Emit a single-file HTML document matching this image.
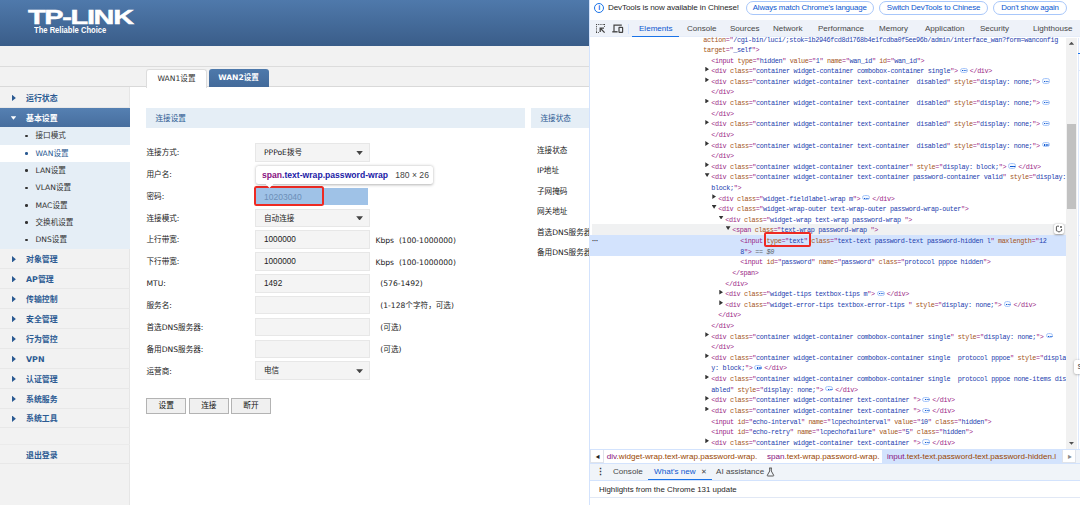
<!DOCTYPE html><html lang="zh"><head><meta charset="utf-8"><title>TP-LINK</title><style>
*{box-sizing:border-box;margin:0;padding:0}
html,body{width:1080px;height:505px;overflow:hidden;background:#fff}
body{position:relative;font-family:"Liberation Sans","Noto Sans CJK SC",sans-serif;font-size:9px;color:#333}
.abs{position:absolute}
#left{position:absolute;left:0;top:0;width:589px;height:505px;background:#fff;overflow:hidden}
#hdr{position:absolute;left:0;top:0;width:589px;height:46px;background:linear-gradient(#4f79ab,#3a5d89)}
#logo{position:absolute;left:27.5px;top:5.6px;font-weight:bold;font-size:19.8px;color:#fff;letter-spacing:-0.9px;transform-origin:0 0;transform:scaleX(1.46);white-space:nowrap;line-height:22px;-webkit-text-stroke:0.45px #fff}
#tag{position:absolute;left:34px;top:24.3px;font-weight:bold;font-size:8.7px;color:#fff;white-space:nowrap;line-height:12px;transform-origin:0 0;transform:scaleX(0.875)}
#band{position:absolute;left:0;top:46px;width:589px;height:41px;background:#f2f2f2}
#band .l1{position:absolute;left:0;top:20px;width:589px;height:1px;background:#dcdcdc}
#band .l2{position:absolute;left:0;top:40px;width:589px;height:1px;background:#d9d9d9}
#side{position:absolute;left:0;top:87px;width:130px;height:418px;background:#f2f2f2;border-right:1px solid #e6e6e6}
.mi{position:absolute;left:0;width:130px;height:20px;line-height:21px;font-family:"DejaVu Sans","Noto Sans CJK SC",sans-serif;font-weight:bold;color:#2b5a92;font-size:7.9px;padding-left:26px;white-space:nowrap;border-bottom:1px solid #e8e8e8}
.mi .ar{position:absolute;left:12px;top:7.2px;width:3.9px;height:6.4px;background:#2b5a92;clip-path:polygon(0 0,100% 50%,0 100%)}
.mi.act{background:linear-gradient(#5580b2,#476e9e);color:#fff}
.mi.act .ar{left:10.7px;top:8.7px;width:5.6px;height:3.5px;background:#fff;clip-path:polygon(0 0,100% 0,50% 100%)}
.si{position:absolute;left:0;width:130px;height:17.4px;line-height:17.4px;color:#333;font-family:"DejaVu Sans","Noto Sans CJK SC",sans-serif;font-size:7.6px;padding-left:35.5px;white-space:nowrap}
.si i{position:absolute;left:25px;top:7.5px;width:2.6px;height:2.6px;border-radius:50%;background:#333}
.si.cur{background:#fff;color:#2b5a92}
.si.cur i{background:#2b5a92}
#main{position:absolute;left:131px;top:87px;width:458px;height:418px;background:#fff}
.tab{position:absolute;top:68.6px;height:18px;line-height:18px;font-family:"DejaVu Sans","Noto Sans CJK SC",sans-serif;font-size:7.6px;text-align:center;border-radius:3px 3px 0 0;white-space:nowrap}
.tab.a{left:146px;width:61px;background:#fff;border:1px solid #ddd;border-bottom:0;color:#333;height:19px}
.tab.b{left:208.5px;width:60px;background:linear-gradient(#4e79ab,#436a9a);color:#fff;font-weight:bold}
.sec{position:absolute;top:108px;height:20px;line-height:21.6px;overflow:hidden;background:#e5eef6;color:#2b5a92;font-family:"DejaVu Sans","Noto Sans CJK SC",sans-serif;font-size:7.6px;padding-left:9.5px;white-space:nowrap}
.lb{position:absolute;left:146.5px;height:18px;line-height:18px;font-family:"DejaVu Sans","Noto Sans CJK SC",sans-serif;font-size:7.6px;color:#222;white-space:nowrap}
.ip{position:absolute;left:255px;width:115px;height:18.6px;line-height:18.6px;background:#f4f4f4;border:1px solid #e7e7e7;font-size:8.2px;color:#222;padding-left:8px;white-space:nowrap}
.ip .dn{position:absolute;right:6px;top:6.8px;width:6.8px;height:4.1px;background:#444;clip-path:polygon(0 0,100% 0,50% 100%)}
.ip.s{font-family:"DejaVu Sans","Noto Sans CJK SC",sans-serif;font-size:7.6px}
.hint{position:absolute;left:375.5px;height:18px;line-height:18px;font-family:"DejaVu Sans","Noto Sans CJK SC",sans-serif;font-size:7.6px;color:#222;white-space:nowrap}
.btn{position:absolute;top:398px;height:15.6px;line-height:13.6px;font-family:"DejaVu Sans","Noto Sans CJK SC",sans-serif;font-size:7.7px;text-align:center;background:#f0f0f0;border:1px solid #b3b3b3;color:#111}
.rl{position:absolute;left:537px;height:18px;line-height:18px;font-family:"DejaVu Sans","Noto Sans CJK SC",sans-serif;font-size:7.6px;color:#222;white-space:nowrap}
#tip{position:absolute;left:256px;top:166.4px;width:177px;height:17.6px;background:#fff;border-radius:2.5px;box-shadow:0 0.5px 3px rgba(0,0,0,.3);font-size:8.6px;line-height:18px;white-space:nowrap;padding-left:6px;color:#444}
#tip b.p{color:#881280}
#tip b.c{color:#1a1aa6}
#tip:after{content:"";position:absolute;left:9.5px;top:17.5px;width:8px;height:4px;background:#fff;clip-path:polygon(0 0,100% 0,50% 100%)}
#hl{position:absolute;left:255px;top:187.7px;width:113px;height:17.3px;background:#9fc2e7}
#hl span{position:absolute;left:9px;top:0;line-height:19px;font-size:8.5px;color:#6c8fb8}
#red1{position:absolute;left:254px;top:186px;width:70px;height:20px;border:2px solid #ee2a23;border-radius:2.5px}
/* devtools */
#dt{position:absolute;left:589px;top:0;width:491px;height:505px;background:#fff;border-left:1px solid #d3e3fd;overflow:hidden;font-family:"Liberation Sans","Noto Sans CJK SC",sans-serif}
#info{position:absolute;left:0;top:0;width:491px;height:19px;background:#fff}
#info .ic{position:absolute;left:4.2px;top:2.6px;width:10.2px;height:10.2px;border:1.1px solid #1a73e8;border-radius:50%;color:#1a73e8;font-size:7.5px;line-height:8.2px;text-align:center;font-weight:bold}
#info .tx{position:absolute;left:18px;top:0;line-height:16.6px;font-size:8.1px;letter-spacing:-0.12px;color:#1f1f1f;white-space:nowrap}
.pill{position:absolute;top:1px;height:13.5px;line-height:11.6px;border:1px solid #a8c7fa;border-radius:7px;color:#0b57d0;font-size:7.9px;letter-spacing:-0.17px;text-align:center;white-space:nowrap;background:#fff}
#tabs{z-index:3;position:absolute;left:0;top:19.5px;width:491px;height:17.3px;background:#eef2f9;border-bottom:1px solid #e6edf9}
#tabs span{position:absolute;top:0;line-height:18px;font-size:8.05px;color:#474747;white-space:nowrap}
#tabs span.on{color:#0b57d0}
#tabs .ul{position:absolute;left:41.8px;top:16.1px;width:47px;height:1.7px;background:#1a73e8}
#tabs .sep{position:absolute;left:38px;top:4px;width:1px;height:10px;background:#d3e3fd}
.cl{position:absolute;left:0;width:476.5px;height:10.7px;line-height:10.6px;font-family:"Liberation Mono","Noto Sans CJK SC",monospace;font-size:6.8px;letter-spacing:-0.346px;white-space:pre;color:#222}
.cl .t{color:#9a2686}.cl .n{color:#a4551a}.cl .v{color:#2340ae}.cl .g{color:#5f6368}
.cl .tw{position:absolute;background:#333}
.cl .tw.r{top:1.9px;width:3.7px;height:4.8px;clip-path:polygon(0 0,100% 50%,0 100%)}
.cl .tw.d{top:2.2px;width:4.8px;height:3.7px;margin-left:-0.6px;clip-path:polygon(0 0,100% 0,50% 100%)}
.cl .el{display:inline-block;width:7.8px;height:5.2px;border:0.8px solid #a8c7fa;border-radius:2.6px;background:#f4f8fe;vertical-align:-0.6px;margin:0 2.1px 0 2.1px;position:relative;font-size:0;letter-spacing:0}
.cl .el:after{content:"";position:absolute;left:1.1px;top:1.35px;width:1.1px;height:1.1px;background:#0b57d0;box-shadow:1.7px 0 0 #0b57d0,3.4px 0 0 #0b57d0}
#sb{position:absolute;left:476.2px;top:37.5px;width:11.2px;height:411.5px;background:#f1f1f1}
#sb .th{position:absolute;left:1px;top:86.5px;width:8.5px;height:85px;background:#c1c1c1}
#sb .u{position:absolute;left:2.6px;top:4.2px;width:5.4px;height:3px;background:#505050;clip-path:polygon(50% 0,100% 100%,0 100%)}
#sb .d{position:absolute;left:2.6px;bottom:4.2px;width:5.4px;height:3px;background:#505050;clip-path:polygon(0 0,100% 0,50% 100%)}
#bc{position:absolute;left:0;top:448.5px;width:491px;height:15px;background:#fff;border-top:1px solid #d3e3fd;border-bottom:1px solid #d3e3fd;font-size:8.1px;line-height:13px;white-space:nowrap;color:#994500}
#bc em{font-style:normal;color:#881280}
#bc span{position:absolute;top:0}
#bc .sel{background:#d3e3fd;height:13px}
#dr{position:absolute;left:0;top:463.5px;width:491px;height:17.5px;background:#f0f4f9;border-bottom:1px solid #d3e3fd;font-size:8.1px;line-height:16px;color:#474747;white-space:nowrap}
#dr span{position:absolute;top:0}
#hlts{position:absolute;left:9px;top:481.5px;line-height:16px;font-size:7.9px;color:#1f1f1f;white-space:nowrap}
</style></head><body>
<div id="left">
<div id="hdr"><div id="logo">TP-LINK</div><div id="tag">The Reliable Choice</div></div>
<div id="band"><div class="l1"></div><div class="l2"></div></div>
<div id="side">
<div class="mi" style="top:0.5px"><span class="ar"></span>运行状态</div>
<div class="mi act" style="top:20.5px"><span class="ar"></span>基本设置</div>
<div class="abs" style="left:0;top:40px;width:130px;height:122px;background:#e5eef6"></div>
<div class="si" style="top:40.2px"><i></i>接口模式</div>
<div class="si cur" style="top:57.5px"><i></i>WAN设置</div>
<div class="si" style="top:74.9px"><i></i>LAN设置</div>
<div class="si" style="top:92.2px"><i></i>VLAN设置</div>
<div class="si" style="top:109.5px"><i></i>MAC设置</div>
<div class="si" style="top:126.8px"><i></i>交换机设置</div>
<div class="si" style="top:144.2px"><i></i>DNS设置</div>
<div class="mi" style="top:161.8px"><span class="ar"></span>对象管理</div>
<div class="mi" style="top:181.8px"><span class="ar"></span>AP管理</div>
<div class="mi" style="top:201.7px"><span class="ar"></span>传输控制</div>
<div class="mi" style="top:221.6px"><span class="ar"></span>安全管理</div>
<div class="mi" style="top:241.6px"><span class="ar"></span>行为管控</div>
<div class="mi" style="top:261.6px"><span class="ar"></span>VPN</div>
<div class="mi" style="top:281.5px"><span class="ar"></span>认证管理</div>
<div class="mi" style="top:301.5px"><span class="ar"></span>系统服务</div>
<div class="mi" style="top:321.4px"><span class="ar"></span>系统工具</div>
<div class="mi" style="top:357.0px;border-top:1px solid #ebebeb">退出登录</div>
</div>
<div id="main"></div>
<div class="tab a">WAN1设置</div><div class="tab b">WAN2设置</div>
<div class="sec" style="left:146px;width:379px">连接设置</div>
<div class="sec" style="left:531px;width:70px">连接状态</div>
<div class="lb" style="top:144.10px">连接方式:</div>
<div class="ip s" style="top:143.00px">PPPoE拨号<span class="dn"></span></div>
<div class="lb" style="top:165.94px">用户名:</div>
<div class="lb" style="top:187.78px">密码:</div>
<div class="lb" style="top:209.62px">连接模式:</div>
<div class="ip s" style="top:208.52px">自动连接<span class="dn"></span></div>
<div class="lb" style="top:231.46px">上行带宽:</div>
<div class="ip" style="top:230.36px">1000000</div>
<div class="hint" style="top:231.76px">Kbps&nbsp;&nbsp;(100-1000000)</div>
<div class="lb" style="top:253.30px">下行带宽:</div>
<div class="ip" style="top:252.20px">1000000</div>
<div class="hint" style="top:253.60px">Kbps&nbsp;&nbsp;(100-1000000)</div>
<div class="lb" style="top:275.14px">MTU:</div>
<div class="ip" style="top:274.04px">1492</div>
<div class="hint" style="top:275.44px">&nbsp;&nbsp;(576-1492)</div>
<div class="lb" style="top:296.98px">服务名:</div>
<div class="ip" style="top:295.88px"></div>
<div class="hint" style="top:297.28px">&nbsp;&nbsp;(1-128个字符，可选)</div>
<div class="lb" style="top:318.82px">首选DNS服务器:</div>
<div class="ip" style="top:317.72px"></div>
<div class="hint" style="top:319.12px">&nbsp;&nbsp;(可选)</div>
<div class="lb" style="top:340.66px">备用DNS服务器:</div>
<div class="ip" style="top:339.56px"></div>
<div class="hint" style="top:340.96px">&nbsp;&nbsp;(可选)</div>
<div class="lb" style="top:362.50px">运营商:</div>
<div class="ip s" style="top:361.40px">电信<span class="dn"></span></div>
<div class="btn" style="left:146.25px;width:40.00px">设置</div>
<div class="btn" style="left:189.00px;width:39.75px">连接</div>
<div class="btn" style="left:231.25px;width:39.50px">断开</div>
<div class="rl" style="top:141.50px">连接状态</div>
<div class="rl" style="top:162.05px">IP地址</div>
<div class="rl" style="top:182.60px">子网掩码</div>
<div class="rl" style="top:203.15px">网关地址</div>
<div class="rl" style="top:223.70px">首选DNS服务器</div>
<div class="rl" style="top:244.25px">备用DNS服务器</div>
<div id="hl"><span>10203040</span></div><div id="red1"></div>
<div id="tip"><b class="p">span</b><b class="c">.text-wrap.password-wrap</b>&nbsp;&nbsp;&nbsp;180 × 26</div>
</div>
<div id="dt">
<div id="info"><div class="ic">i</div><div class="tx">DevTools is now available in Chinese!</div>
<div class="pill" style="left:155.5px;width:128.5px">Always match Chrome's language</div>
<div class="pill" style="left:289.0px;width:109.0px">Switch DevTools to Chinese</div>
<div class="pill" style="left:403.0px;width:74.0px">Don't show again</div>
</div>
<div id="tabs"><div class="sep"></div><div class="ul"></div><svg class="abs" style="left:5px;top:3.5px" width="11" height="11" viewBox="0 0 11 11"><g fill="none" stroke="#444" stroke-width="1"><path d="M1 1.5H9.5" stroke-dasharray="1.1 1.1"/><path d="M1.5 1V9.5" stroke-dasharray="1.1 1.1"/><path d="M9.5 1V4" stroke-dasharray="1.1 1.1"/><path d="M1 9.5H4" stroke-dasharray="1.1 1.1"/><path d="M9.6 9.6L5.3 5.3M5.2 9V5.2H9" stroke-width="1.3"/></g></svg><svg class="abs" style="left:21.5px;top:4.5px" width="12" height="10" viewBox="0 0 12 10"><g fill="none" stroke="#444" stroke-width="1.2"><path d="M2 7.4V1.2H9.8"/><path d="M0.3 7.8H5.6" stroke-width="1.4"/><rect x="7" y="3.3" width="3.6" height="5" rx="0.4"/></g></svg>
<span style="left:49px" class="on">Elements</span>
<span style="left:97px">Console</span>
<span style="left:140px">Sources</span>
<span style="left:183px">Network</span>
<span style="left:228px">Performance</span>
<span style="left:289px">Memory</span>
<span style="left:335px">Application</span>
<span style="left:390px">Security</span>
<span style="left:443px">Lighthouse</span>
</div>
<div class="cl" style="top:33.55px;"><span style="position:absolute;left:113.3px;top:1.3px"><span class="n">action</span><span class="t">="</span><span class="v">/cgi-bin/luci/;stok=1b2946fcd8d1768b4e1fcdba0f5ee96b/admin/interface_wan?form=wanconfig</span></span></div>
<div class="cl" style="top:43.67px;"><span style="position:absolute;left:113.3px;top:1.3px"><span class="n">target</span><span class="t">="</span><span class="v">_self</span><span class="t">"</span><span class="t">&gt;</span></span></div>
<div class="cl" style="top:54.28px;"><span style="position:absolute;left:121.3px;top:1.3px"><span class="t">&lt;input</span> <span class="n">type</span><span class="t">="</span><span class="v">hidden</span><span class="t">"</span> <span class="n">value</span><span class="t">="</span><span class="v">1</span><span class="t">"</span> <span class="n">name</span><span class="t">="</span><span class="v">wan_id</span><span class="t">"</span> <span class="n">id</span><span class="t">="</span><span class="v">wan_id</span><span class="t">"</span><span class="t">&gt;</span></span></div>
<div class="cl" style="top:64.90px;"><span class="tw r" style="left:115.3px"></span><span style="position:absolute;left:121.3px;top:1.3px"><span class="t">&lt;div</span> <span class="n">class</span><span class="t">="</span><span class="v">container widget-container combobox-container single</span><span class="t">"</span><span class="t">&gt;</span><span class="el">…</span><span class="t">&lt;/div&gt;</span></span></div>
<div class="cl" style="top:75.52px;"><span class="tw r" style="left:115.3px"></span><span style="position:absolute;left:121.3px;top:1.3px"><span class="t">&lt;div</span> <span class="n">class</span><span class="t">="</span><span class="v">container widget-container text-container  disabled</span><span class="t">"</span> <span class="n">style</span><span class="t">="</span><span class="v">display: none;</span><span class="t">"</span><span class="t">&gt;</span><span class="el">…</span></span></div>
<div class="cl" style="top:86.14px;"><span style="position:absolute;left:121.3px;top:1.3px"><span class="t">&lt;/div&gt;</span></span></div>
<div class="cl" style="top:96.75px;"><span class="tw r" style="left:115.3px"></span><span style="position:absolute;left:121.3px;top:1.3px"><span class="t">&lt;div</span> <span class="n">class</span><span class="t">="</span><span class="v">container widget-container text-container  disabled</span><span class="t">"</span> <span class="n">style</span><span class="t">="</span><span class="v">display: none;</span><span class="t">"</span><span class="t">&gt;</span><span class="el">…</span></span></div>
<div class="cl" style="top:107.37px;"><span style="position:absolute;left:121.3px;top:1.3px"><span class="t">&lt;/div&gt;</span></span></div>
<div class="cl" style="top:117.99px;"><span class="tw r" style="left:115.3px"></span><span style="position:absolute;left:121.3px;top:1.3px"><span class="t">&lt;div</span> <span class="n">class</span><span class="t">="</span><span class="v">container widget-container text-container  disabled</span><span class="t">"</span> <span class="n">style</span><span class="t">="</span><span class="v">display: none;</span><span class="t">"</span><span class="t">&gt;</span><span class="el">…</span></span></div>
<div class="cl" style="top:128.60px;"><span style="position:absolute;left:121.3px;top:1.3px"><span class="t">&lt;/div&gt;</span></span></div>
<div class="cl" style="top:139.22px;"><span class="tw r" style="left:115.3px"></span><span style="position:absolute;left:121.3px;top:1.3px"><span class="t">&lt;div</span> <span class="n">class</span><span class="t">="</span><span class="v">container widget-container text-container  disabled</span><span class="t">"</span> <span class="n">style</span><span class="t">="</span><span class="v">display: none;</span><span class="t">"</span><span class="t">&gt;</span><span class="el">…</span></span></div>
<div class="cl" style="top:149.84px;"><span style="position:absolute;left:121.3px;top:1.3px"><span class="t">&lt;/div&gt;</span></span></div>
<div class="cl" style="top:160.45px;"><span class="tw r" style="left:115.3px"></span><span style="position:absolute;left:121.3px;top:1.3px"><span class="t">&lt;div</span> <span class="n">class</span><span class="t">="</span><span class="v">container widget-container text-container</span><span class="t">"</span> <span class="n">style</span><span class="t">="</span><span class="v">display: block;</span><span class="t">"</span><span class="t">&gt;</span><span class="el">…</span><span class="t">&lt;/div&gt;</span></span></div>
<div class="cl" style="top:171.07px;"><span class="tw d" style="left:115.3px"></span><span style="position:absolute;left:121.3px;top:1.3px"><span class="t">&lt;div</span> <span class="n">class</span><span class="t">="</span><span class="v">container widget-container text-container password-container valid</span><span class="t">"</span> <span class="n">style</span><span class="t">="</span><span class="v">display:</span></span></div>
<div class="cl" style="top:181.69px;"><span style="position:absolute;left:121.3px;top:1.3px"><span class="v">block;</span><span class="t">"&gt;</span></span></div>
<div class="cl" style="top:192.31px;"><span class="tw r" style="left:122.3px"></span><span style="position:absolute;left:128.3px;top:1.3px"><span class="t">&lt;div</span> <span class="n">class</span><span class="t">="</span><span class="v">widget-fieldlabel-wrap m</span><span class="t">"</span><span class="t">&gt;</span><span class="el">…</span><span class="t">&lt;/div&gt;</span></span></div>
<div class="cl" style="top:202.92px;"><span class="tw d" style="left:122.3px"></span><span style="position:absolute;left:128.3px;top:1.3px"><span class="t">&lt;div</span> <span class="n">class</span><span class="t">="</span><span class="v">widget-wrap-outer text-wrap-outer password-wrap-outer</span><span class="t">"</span><span class="t">&gt;</span></span></div>
<div class="cl" style="top:213.54px;"><span class="tw d" style="left:129.3px"></span><span style="position:absolute;left:135.3px;top:1.3px"><span class="t">&lt;div</span> <span class="n">class</span><span class="t">="</span><span class="v">widget-wrap text-wrap password-wrap </span><span class="t">"</span><span class="t">&gt;</span></span></div>
<div class="cl" style="top:224.16px;background:#f0f1f2;box-shadow:inset 2px 0 0 #fff;"><span class="tw d" style="left:136.3px"></span><span style="position:absolute;left:142.3px;top:1.3px"><span class="t">&lt;span</span> <span class="n">class</span><span class="t">="</span><span class="v">text-wrap password-wrap </span><span class="t">"</span><span class="t">&gt;</span></span></div>
<div class="cl" style="top:234.77px;background:#d3e3fd;"><span style="position:absolute;left:150.3px;top:1.3px"><span class="t">&lt;input</span> <span class="n">type</span><span class="t">="</span><span class="v">text</span><span class="t">"</span> <span class="n">class</span><span class="t">="</span><span class="v">text-text password-text password-hidden l</span><span class="t">"</span> <span class="n">maxlength</span><span class="t">="</span><span class="v">12</span></span></div>
<div class="cl" style="top:245.39px;background:#d3e3fd;"><span style="position:absolute;left:150.3px;top:1.3px"><span class="v">8</span><span class="t">"&gt;</span> <span class="g">== <i>$0</i></span></span></div>
<div class="cl" style="top:256.01px;"><span style="position:absolute;left:150.3px;top:1.3px"><span class="t">&lt;input</span> <span class="n">id</span><span class="t">="</span><span class="v">password</span><span class="t">"</span> <span class="n">name</span><span class="t">="</span><span class="v">password</span><span class="t">"</span> <span class="n">class</span><span class="t">="</span><span class="v">protocol pppoe hidden</span><span class="t">"</span><span class="t">&gt;</span></span></div>
<div class="cl" style="top:266.62px;"><span style="position:absolute;left:142.3px;top:1.3px"><span class="t">&lt;/span&gt;</span></span></div>
<div class="cl" style="top:277.24px;"><span style="position:absolute;left:135.3px;top:1.3px"><span class="t">&lt;/div&gt;</span></span></div>
<div class="cl" style="top:287.86px;"><span class="tw r" style="left:129.3px"></span><span style="position:absolute;left:135.3px;top:1.3px"><span class="t">&lt;div</span> <span class="n">class</span><span class="t">="</span><span class="v">widget-tips textbox-tips m</span><span class="t">"</span><span class="t">&gt;</span><span class="el">…</span><span class="t">&lt;/div&gt;</span></span></div>
<div class="cl" style="top:298.48px;"><span class="tw r" style="left:129.3px"></span><span style="position:absolute;left:135.3px;top:1.3px"><span class="t">&lt;div</span> <span class="n">class</span><span class="t">="</span><span class="v">widget-error-tips textbox-error-tips </span><span class="t">"</span> <span class="n">style</span><span class="t">="</span><span class="v">display: none;</span><span class="t">"</span><span class="t">&gt;</span><span class="el">…</span><span class="t">&lt;/div&gt;</span></span></div>
<div class="cl" style="top:309.09px;"><span style="position:absolute;left:128.3px;top:1.3px"><span class="t">&lt;/div&gt;</span></span></div>
<div class="cl" style="top:319.71px;"><span style="position:absolute;left:121.3px;top:1.3px"><span class="t">&lt;/div&gt;</span></span></div>
<div class="cl" style="top:330.33px;"><span class="tw r" style="left:115.3px"></span><span style="position:absolute;left:121.3px;top:1.3px"><span class="t">&lt;div</span> <span class="n">class</span><span class="t">="</span><span class="v">container widget-container combobox-container single</span><span class="t">"</span> <span class="n">style</span><span class="t">="</span><span class="v">display: none;</span><span class="t">"</span><span class="t">&gt;</span><span class="el">…</span></span></div>
<div class="cl" style="top:340.94px;"><span style="position:absolute;left:121.3px;top:1.3px"><span class="t">&lt;/div&gt;</span></span></div>
<div class="cl" style="top:351.56px;"><span class="tw r" style="left:115.3px"></span><span style="position:absolute;left:121.3px;top:1.3px"><span class="t">&lt;div</span> <span class="n">class</span><span class="t">="</span><span class="v">container widget-container combobox-container single  protocol pppoe</span><span class="t">"</span> <span class="n">style</span><span class="t">="</span><span class="v">displa</span></span></div>
<div class="cl" style="top:362.18px;"><span style="position:absolute;left:121.3px;top:1.3px"><span class="v">y: block;</span><span class="t">"&gt;</span><span class="el">…</span><span class="t">&lt;/div&gt;</span></span></div>
<div class="cl" style="top:372.79px;"><span class="tw r" style="left:115.3px"></span><span style="position:absolute;left:121.3px;top:1.3px"><span class="t">&lt;div</span> <span class="n">class</span><span class="t">="</span><span class="v">container widget-container combobox-container single  protocol pppoe none-items dis</span></span></div>
<div class="cl" style="top:383.41px;"><span style="position:absolute;left:121.3px;top:1.3px"><span class="v">abled</span><span class="t">"</span> <span class="n">style</span><span class="t">="</span><span class="v">display: none;</span><span class="t">"</span><span class="t">&gt;</span><span class="el">…</span><span class="t">&lt;/div&gt;</span></span></div>
<div class="cl" style="top:394.03px;"><span class="tw r" style="left:115.3px"></span><span style="position:absolute;left:121.3px;top:1.3px"><span class="t">&lt;div</span> <span class="n">class</span><span class="t">="</span><span class="v">container widget-container text-container </span><span class="t">"</span><span class="t">&gt;</span><span class="el">…</span><span class="t">&lt;/div&gt;</span></span></div>
<div class="cl" style="top:404.65px;"><span class="tw r" style="left:115.3px"></span><span style="position:absolute;left:121.3px;top:1.3px"><span class="t">&lt;div</span> <span class="n">class</span><span class="t">="</span><span class="v">container widget-container text-container </span><span class="t">"</span><span class="t">&gt;</span><span class="el">…</span><span class="t">&lt;/div&gt;</span></span></div>
<div class="cl" style="top:415.26px;"><span style="position:absolute;left:121.3px;top:1.3px"><span class="t">&lt;input</span> <span class="n">id</span><span class="t">="</span><span class="v">echo-interval</span><span class="t">"</span> <span class="n">name</span><span class="t">="</span><span class="v">lcpechointerval</span><span class="t">"</span> <span class="n">value</span><span class="t">="</span><span class="v">10</span><span class="t">"</span> <span class="n">class</span><span class="t">="</span><span class="v">hidden</span><span class="t">"</span><span class="t">&gt;</span></span></div>
<div class="cl" style="top:425.88px;"><span style="position:absolute;left:121.3px;top:1.3px"><span class="t">&lt;input</span> <span class="n">id</span><span class="t">="</span><span class="v">echo-retry</span><span class="t">"</span> <span class="n">name</span><span class="t">="</span><span class="v">lcpechofailure</span><span class="t">"</span> <span class="n">value</span><span class="t">="</span><span class="v">5</span><span class="t">"</span> <span class="n">class</span><span class="t">="</span><span class="v">hidden</span><span class="t">"</span><span class="t">&gt;</span></span></div>
<div class="cl" style="top:436.50px;"><span class="tw r" style="left:115.3px"></span><span style="position:absolute;left:121.3px;top:1.3px"><span class="t">&lt;div</span> <span class="n">class</span><span class="t">="</span><span class="v">container widget-container text-container </span><span class="t">"</span><span class="t">&gt;</span><span class="el">…</span><span class="t">&lt;/div&gt;</span></span></div>
<div class="abs" style="left:2px;top:237.6px;font-size:7px;line-height:6px;color:#333;font-weight:bold;letter-spacing:-0.3px">···</div>
<div class="abs" style="left:487.5px;top:37.5px;width:1px;height:411px;background:#dfe9fb"></div><div class="abs" style="left:487.5px;top:52.8px;width:3px;height:1.5px;background:#1a73e8"></div><div class="abs" style="left:488px;top:69.5px;width:3px;height:1px;background:#dfe9fb"></div><div class="abs" style="left:488px;top:235px;width:3px;height:1px;background:#dfe9fb"></div><div class="abs" style="left:484px;top:359.6px;width:8px;height:14.8px;background:#fff;border-radius:2px;box-shadow:0 0.5px 2.5px rgba(0,0,0,.35);font-size:8px;line-height:14px;padding-left:3.5px;color:#333;z-index:4">S</div>
<div id="sb"><div class="u"></div><div class="th"></div><div class="d"></div></div>
<div class="abs" style="left:174.0px;top:232.3px;width:47.3px;height:14.5px;border:2px solid #ee2a23;border-radius:2px"></div>
<div class="abs" style="left:464.0px;top:224px;width:10px;height:9.8px;border-radius:2px;background:#fff;box-shadow:0 0.5px 2px rgba(0,0,0,.35)"><svg width="10" height="10" viewBox="0 0 10 10" style="position:absolute;left:0;top:0"><path d="M5 2.2H3.2Q2.4 2.2 2.4 3V6.4Q2.4 7.2 3.2 7.2H3.8L5 8.2L6.2 7.2H6.8Q7.6 7.2 7.6 6.4V5" fill="none" stroke="#444" stroke-width="0.9"/><circle cx="7" cy="3" r="0.9" fill="#444"/></svg></div>
<div id="bc"><div class="abs" style="left:0;top:0;width:14px;height:13px;border:1px solid #dfe3ea;border-top:0;background:#fff"></div><div class="abs" style="left:472px;top:0;width:14px;height:13px;border:1px solid #dfe3ea;border-top:0;background:#fff"></div><div class="abs" style="left:486px;top:0;width:5px;height:13px;background:#f0f4f9"></div>
<span style="left:5.5px;color:#222;font-size:4.5px">◀</span><span style="left:477.5px;color:#8a8a8a;font-size:4.5px">▶</span>
<span style="left:16.8px"><em>div</em>.widget-wrap.text-wrap.password-wrap.</span>
<span style="left:177.0px"><em>span</em>.text-wrap.password-wrap.</span>
<span class="sel" style="left:292.4px;width:179.2px;padding-left:4.5px"><em>input</em>.text-text.password-text.password-hidden.l</span>
</div>
<div id="dr"><span style="left:5.5px;font-weight:bold;color:#333;font-size:9px">⋮</span><span style="left:23px">Console</span><span style="left:64px;color:#0b57d0">What's new</span><span style="left:111px;font-size:7px">✕</span><span style="left:126px">AI assistance</span>
<svg class="abs" style="left:176px;top:3.5px" width="9" height="10" viewBox="0 0 9 10"><path d="M3.2 1H5.8M3.7 1V4L1.3 8.3Q1.1 9 1.8 9H7.2Q7.9 9 7.7 8.3L5.3 4V1" fill="none" stroke="#474747" stroke-width="0.9"/></svg>
<div class="abs" style="left:58.2px;top:15.3px;width:64px;height:1.7px;background:#1a73e8"></div>
</div>
<div id="hlts">Highlights from the Chrome 131 update</div>
<div class="abs" style="left:0;top:497px;width:491px;height:1px;background:#e1e8f5"></div>
</div>
</body></html>
